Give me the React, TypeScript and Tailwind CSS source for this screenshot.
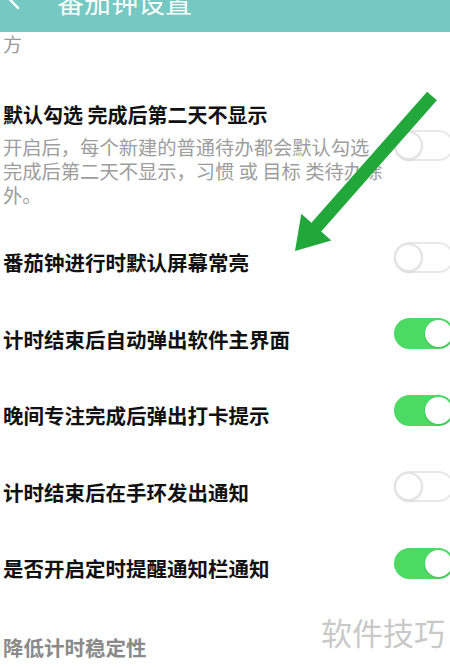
function Toggle({ on }: { on: boolean }) {
  if (on) {
    return (
      <div className="mb-[10px] flex h-[31px] w-[60px] shrink-0 items-center justify-end rounded-full bg-[#4cd964] pr-[2px]">
        <div className="h-[27px] w-[27px] rounded-full bg-white shadow-[0_1px_2px_rgba(0,0,0,0.15)]" />
      </div>
    );
  }
  return (
    <div className="mb-[10px] flex h-[31px] w-[60px] shrink-0 items-center rounded-full border-2 border-[#e8e8e8] bg-white">
      <div className="h-[29px] w-[29px] -ml-[2px] rounded-full border-2 border-[#e3e3e3] bg-white shadow-[0_1px_2px_rgba(0,0,0,0.08)]" />
    </div>
  );
}

const rows = [
  { title: "番茄钟进行时默认屏幕常亮", on: false },
  { title: "计时结束后自动弹出软件主界面", on: true },
  { title: "晚间专注完成后弹出打卡提示", on: true },
  { title: "计时结束后在手环发出通知", on: false },
  { title: "是否开启定时提醒通知栏通知", on: true },
];

export default function App() {
  return (
    <div className="relative h-[667px] w-[450px] overflow-hidden bg-white [font-family:'Noto_Sans_CJK_SC','Noto_Sans',sans-serif]">
      {/* header, scrolled mostly out of view */}
      <header className="h-[32px] overflow-hidden bg-[#76c9c2]">
        <div className="-mt-[12px] flex items-center">
          <svg width="26" height="27" viewBox="0 0 26 27" className="-mt-[4px] ml-[4px]">
            <path d="M14 3 L5 12.5 L14 22" fill="none" stroke="white" strokeWidth="2.5" strokeLinecap="round" strokeLinejoin="round" />
          </svg>
          <span className="ml-[27px] text-[27px] leading-[27px] text-white">番茄钟设置</span>
        </div>
      </header>

      <p className="pl-[3px] text-[19px] leading-[24px] text-[#9a9a9a]">方</p>

      <div className="mt-[45px] flex items-start justify-between">
        <div className="pl-[3px]">
          <h2 className="text-[20px] font-bold leading-[28px] text-[#111]">默认勾选 完成后第二天不显示</h2>
          <p className="mt-[6px] text-[19.3px] leading-[24px] text-[#9d9d9d]">
            开启后，每个新建的普通待办都会默认勾选
            <br />
            完成后第二天不显示，习惯 或 目标 类待办除
            <br />
            外。
          </p>
        </div>
        <div className="mt-[29px] -mr-[4px]">
          <Toggle on={false} />
        </div>
      </div>

      <div className="mt-[17px]">
        {rows.map((r) => (
          <div key={r.title} className="flex h-[76.5px] items-center justify-between">
            <span className="pl-[3px] text-[20.5px] font-bold leading-[28px] text-[#111]">{r.title}</span>
            <div className="-mr-[4px]">
              <Toggle on={r.on} />
            </div>
          </div>
        ))}
      </div>

      <p className="mt-[26px] pl-[3px] text-[20.5px] font-bold leading-[28px] text-[#8a8a8a]">降低计时稳定性</p>

      {/* watermark */}
      <span className="absolute right-[5px] top-[613px] text-[31px] leading-[38px] text-[#c9c9c9]">软件技巧</span>

      {/* annotation arrow */}
      <svg className="pointer-events-none absolute left-0 top-0" width="450" height="667">
        <polygon
          points="427.1,91.7 436.9,100.3 321.2,231.4 331.3,240.4 295,251 301.3,213.8 311.4,222.8"
          fill="#22a83a"
        />
      </svg>
    </div>
  );
}
